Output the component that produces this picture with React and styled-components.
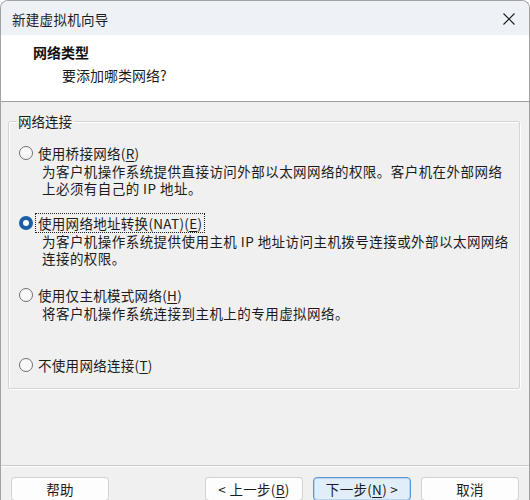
import React from "react";
import styled, { createGlobalStyle, css } from "styled-components";

const Global = createGlobalStyle`
  html, body { margin: 0; padding: 0; background: #ffffff; }
  body { font-family: "Noto Sans CJK SC", "Noto Sans", sans-serif; color: #1b1b1b; }
  * { box-sizing: border-box; }
`;

const Window = styled.div`
  width: 530px;
  height: 500px;
  border: 1px solid #a2a2a2;
  border-bottom: none;
  border-radius: 8px 8px 0 0;
  overflow: hidden;
  display: flex;
  flex-direction: column;
  background: #f0f0f0;
`;

const TitleBar = styled.div`
  height: 34px;
  flex-shrink: 0;
  background: #eef2f7;
  display: flex;
  align-items: center;
  justify-content: space-between;
  padding: 1px 14px 0 11px;
  font-size: 13.5px;
  letter-spacing: 0.3px;
  line-height: 18px;
  color: #1b1b1b;
`;

const CloseButton = styled.span`
  display: flex;
  width: 12px;
  height: 12px;
`;

const Header = styled.div`
  height: 67px;
  flex-shrink: 0;
  background: #ffffff;
  border-bottom: 1px solid #a0a0a0;
  padding: 7px 0 0 32px;
`;

const HeaderTitle = styled.div`
  font-size: 14px;
  font-weight: 700;
  line-height: 20px;
  color: #111;
`;

const HeaderSub = styled.div`
  font-size: 14px;
  line-height: 20px;
  margin: 3px 0 0 29px;
  color: #1b1b1b;
`;

const Body = styled.div`
  flex: 1;
  padding: 10px 9px 0 7px;
  font-size: 13.5px;
`;

const GroupBox = styled.fieldset`
  margin: 0;
  padding: 0 0 14px 10px;
  border: 1px solid #d4d4d4;
  border-radius: 2px;
  box-shadow: inset 1px 1px 0 #ffffff, 1px 1px 0 #ffffff;
  min-width: 0;
`;

const Legend = styled.legend`
  padding: 0 2px;
  margin-left: -3px;
  font-size: 13.5px;
  line-height: 18px;
  color: #1b1b1b;
`;

const Option = styled.div`
  margin-top: ${(p) => p.$top}px;
`;

const OptionRow = styled.div`
  display: flex;
  align-items: center;
  height: 18px;
`;

const Radio = styled.span`
  width: 14px;
  height: 14px;
  border-radius: 50%;
  margin-right: 3px;
  flex-shrink: 0;
  ${(p) =>
    p.$checked
      ? css`
          background: #1a5ea8;
          display: flex;
          align-items: center;
          justify-content: center;
          &::after {
            content: "";
            width: 6px;
            height: 6px;
            border-radius: 50%;
            background: #ffffff;
          }
        `
      : css`
          border: 1px solid #6f6f6f;
          background: #f9f9f9;
        `}
`;

const OptionLabel = styled.span`
  padding: 0 2px;
  line-height: 18px;
  letter-spacing: 0.3px;
  color: #1b1b1b;
  ${(p) =>
    p.$focused &&
    css`
      outline: 1px dotted #222;
      outline-offset: 0;
    `}
`;

const Description = styled.div`
  padding-left: 23px;
  margin-top: 1px;
  line-height: 17px;
  letter-spacing: 0.45px;
  color: #1b1b1b;
`;

const Key = styled.span`
  text-decoration: underline;
  text-underline-offset: 2px;
  text-decoration-thickness: 1px;
`;

const Footer = styled.div`
  height: 35px;
  flex-shrink: 0;
  border-top: 1px solid #c9c9c9;
  box-shadow: inset 0 1px 0 #ffffff;
  display: flex;
  align-items: flex-start;
  padding: 11px 10px 0 10px;
  gap: 10px;
`;

const Button = styled.button`
  width: 98px;
  height: 24px;
  flex-shrink: 0;
  font-family: "Noto Sans CJK SC", "Noto Sans", sans-serif;
  font-size: 13.5px;
  line-height: 20px;
  letter-spacing: 0.3px;
  color: #1b1b1b;
  padding: 0;
  border-radius: 4px;
  border: 1px solid #d2d2d2;
  border-bottom-color: #b5b5b5;
  background: #fdfdfd;
  ${(p) => p.$push && css`margin-right: auto;`}
  ${(p) =>
    p.$primary &&
    css`
      background: #e1eef9;
      border: 1px solid #5b97cf;
      box-shadow: inset 0 0 0 1px #b9d5ee;
    `}
`;

const options = [
  {
    top: 14,
    label: "使用桥接网络(",
    key: "R",
    desc: ["为客户机操作系统提供直接访问外部以太网网络的权限。客户机在外部网络", "上必须有自己的 IP 地址。"],
  },
  {
    top: 17,
    label: "使用网络地址转换(NAT)(",
    key: "E",
    desc: ["为客户机操作系统提供使用主机 IP 地址访问主机拨号连接或外部以太网网络", "连接的权限。"],
    checked: true,
  },
  {
    top: 19,
    label: "使用仅主机模式网络(",
    key: "H",
    desc: ["将客户机操作系统连接到主机上的专用虚拟网络。"],
  },
  { top: 34, label: "不使用网络连接(", key: "T", desc: [] },
];

export default function App() {
  return (
    <>
      <Global />
      <Window>
        <TitleBar>
          <span>新建虚拟机向导</span>
          <CloseButton>
            <svg width="12" height="12" viewBox="0 0 12 12">
              <path d="M0.5 0.5 L11.5 11.5 M11.5 0.5 L0.5 11.5" stroke="#1b1b1b" strokeWidth="1.1" fill="none" />
            </svg>
          </CloseButton>
        </TitleBar>
        <Header>
          <HeaderTitle>网络类型</HeaderTitle>
          <HeaderSub>要添加哪类网络?</HeaderSub>
        </Header>
        <Body>
          <GroupBox>
            <Legend>网络连接</Legend>
            {options.map((o) => (
              <Option key={o.key} $top={o.top}>
                <OptionRow>
                  <Radio $checked={o.checked} />
                  <OptionLabel $focused={o.checked}>
                    {o.label}
                    <Key>{o.key}</Key>)
                  </OptionLabel>
                </OptionRow>
                {o.desc.length > 0 && (
                  <Description>
                    {o.desc.map((d) => (
                      <div key={d}>{d}</div>
                    ))}
                  </Description>
                )}
              </Option>
            ))}
          </GroupBox>
        </Body>
        <Footer>
          <Button $push>帮助</Button>
          <Button>
            &lt; 上一步(<Key>B</Key>)
          </Button>
          <Button $primary>
            下一步(<Key>N</Key>) &gt;
          </Button>
          <Button>取消</Button>
        </Footer>
      </Window>
    </>
  );
}
